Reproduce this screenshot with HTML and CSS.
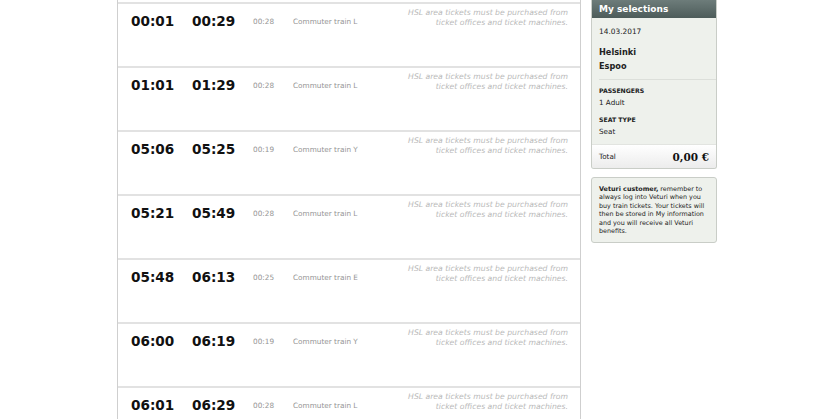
FILE: index.html
```html
<!DOCTYPE html>
<html>
<head>
<meta charset="utf-8">
<link rel="stylesheet" href="styles.css">
</head>
<body>
<div class="page">
  <div class="results">
    <div class="row">
      <div class="time">00:01</div><div class="time">00:29</div><div class="dur">00:28</div><div class="train">Commuter train L</div>
      <div class="note">HSL area tickets must be purchased from<br>ticket offices and ticket machines.</div>
    </div>
    <div class="row">
      <div class="time">01:01</div><div class="time">01:29</div><div class="dur">00:28</div><div class="train">Commuter train L</div>
      <div class="note">HSL area tickets must be purchased from<br>ticket offices and ticket machines.</div>
    </div>
    <div class="row">
      <div class="time">05:06</div><div class="time">05:25</div><div class="dur">00:19</div><div class="train">Commuter train Y</div>
      <div class="note">HSL area tickets must be purchased from<br>ticket offices and ticket machines.</div>
    </div>
    <div class="row">
      <div class="time">05:21</div><div class="time">05:49</div><div class="dur">00:28</div><div class="train">Commuter train L</div>
      <div class="note">HSL area tickets must be purchased from<br>ticket offices and ticket machines.</div>
    </div>
    <div class="row">
      <div class="time">05:48</div><div class="time">06:13</div><div class="dur">00:25</div><div class="train">Commuter train E</div>
      <div class="note">HSL area tickets must be purchased from<br>ticket offices and ticket machines.</div>
    </div>
    <div class="row">
      <div class="time">06:00</div><div class="time">06:19</div><div class="dur">00:19</div><div class="train">Commuter train Y</div>
      <div class="note">HSL area tickets must be purchased from<br>ticket offices and ticket machines.</div>
    </div>
    <div class="row">
      <div class="time">06:01</div><div class="time">06:29</div><div class="dur">00:28</div><div class="train">Commuter train L</div>
      <div class="note">HSL area tickets must be purchased from<br>ticket offices and ticket machines.</div>
    </div>
  </div>
  <div class="side">
    <div class="selections">
      <div class="sel-head">My selections</div>
      <div class="sel-body">
        <div class="date">14.03.2017</div>
        <div class="route">Helsinki<br>Espoo</div>
        <div class="divider"></div>
        <div class="label">PASSENGERS</div>
        <div class="value">1 Adult</div>
        <div class="label label-2">SEAT TYPE</div>
        <div class="value">Seat</div>
      </div>
      <div class="total">
        <span class="total-label">Total</span>
        <span class="total-sum">0,00 €</span>
      </div>
    </div>
    <div class="info">
      <b>Veturi customer,</b> remember to<br>always log into Veturi when you<br>buy train tickets. Your tickets will<br>then be stored in My information<br>and you will receive all Veturi<br>benefits.
    </div>
  </div>
</div>
</body>
</html>
```

FILE: styles.css
```css
html, body {
  margin: 0;
  padding: 0;
  background: #ffffff;
  font-family: "DejaVu Sans", Verdana, sans-serif;
  overflow: hidden;
}
.page {
  display: flex;
  align-items: flex-start;
  padding-left: 117px;
  gap: 10px;
}
.results {
  width: 464px;
  border-left: 1px solid #cfcfcf;
  border-right: 1px solid #cfcfcf;
  padding-top: 2px;
  height: 419px;
  box-sizing: border-box;
  overflow: hidden;
}
.row {
  display: grid;
  grid-template-columns: 61px 61px 40px 1fr auto;
  align-items: start;
  height: 62px;
  border-top: 2px solid #e2e2e2;
  padding: 0 12px 0 13px;
}
.time {
  font-weight: bold;
  font-size: 13.6px;
  line-height: 16px;
  padding-top: 9px;
  color: #111;
}
.dur, .train {
  font-size: 7.3px;
  line-height: 10px;
  padding-top: 13px;
  color: #959595;
}
.note {
  font-size: 7.7px;
  line-height: 10px;
  padding-top: 4px;
  font-style: italic;
  text-align: right;
  color: #b9b9b9;
}
.side {
  width: 126px;
  display: flex;
  flex-direction: column;
  gap: 8px;
}
.selections {
  background: #eef1ec;
  border: 1px solid #c9cdc7;
  border-top: none;
  border-radius: 0 0 3px 3px;
  overflow: hidden;
}
.sel-head {
  height: 18px;
  line-height: 18px;
  padding-left: 7px;
  background: linear-gradient(#6d7c7a, #4d5c5a);
  color: #ffffff;
  font-weight: bold;
  font-size: 9px;
}
.sel-body {
  padding: 9px 7px 6px 7px;
  color: #222;
}
.date {
  font-size: 7.4px;
  line-height: 10px;
}
.route {
  margin-top: 8px;
  font-weight: bold;
  font-size: 8.2px;
  line-height: 14px;
}
.divider {
  height: 1px;
  background: #dcdfda;
  margin: 6px -7px 6px 0;
}
.label {
  font-weight: bold;
  font-size: 6.2px;
  line-height: 10px;
}
.label-2 {
  margin-top: 6px;
}
.value {
  font-size: 7.2px;
  line-height: 13px;
}
.total {
  display: flex;
  justify-content: space-between;
  align-items: center;
  height: 23px;
  padding: 0 7px;
  background: linear-gradient(#ffffff, #ececec);
  border-top: 1px solid #e2e4e0;
}
.total-label {
  font-size: 7.2px;
  color: #222;
}
.total-sum {
  font-family: "DejaVu Serif", Georgia, serif;
  font-weight: bold;
  font-size: 10.5px;
  color: #111;
}
.info {
  background: #eef1ec;
  border: 1px solid #c9cdc7;
  border-radius: 3px;
  padding: 7px 7px 7px 7px;
  font-size: 6.4px;
  line-height: 8.4px;
  white-space: nowrap;
  color: #222;
}
.info b {
  font-weight: bold;
}
```
